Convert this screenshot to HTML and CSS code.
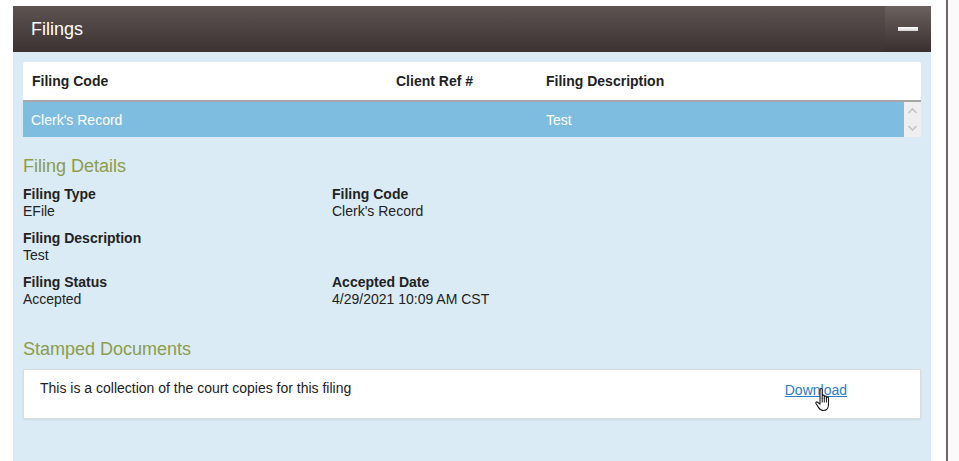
FILE: index.html
```html
<!DOCTYPE html>
<html lang="en">
<head>
    <meta charset="UTF-8">
    <meta name="viewport" content="width=device-width, initial-scale=1.0">
    <title>Filings</title>
    <link rel="stylesheet" href="styles.css">
</head>
<body>
    <div class="page">
        <div class="panel">
            <div class="panel-header">
                <h2 class="panel-title">Filings</h2>
                <div class="collapse-btn"><span class="minus"></span></div>
            </div>
            <div class="panel-body">
                <div class="grid">
                    <div class="grid-head">
                        <div>Filing Code</div>
                        <div>Client Ref #</div>
                        <div>Filing Description</div>
                    </div>
                    <div class="grid-content">
                        <div class="grid-rows">
                            <div class="grid-row selected">
                                <div>Clerk's Record</div>
                                <div></div>
                                <div>Test</div>
                            </div>
                        </div>
                        <div class="scrollbar">
                            <svg width="17" height="35" viewBox="0 0 17 35">
                                <path d="M4.5 11 L8.5 7 L12.5 11" fill="none" stroke="#c4c4c4" stroke-width="1.6"/>
                                <path d="M4.5 24 L8.5 28 L12.5 24" fill="none" stroke="#c4c4c4" stroke-width="1.6"/>
                            </svg>
                        </div>
                    </div>
                </div>

                <h3 class="section-title">Filing Details</h3>
                <div class="details">
                    <div class="field">
                        <div class="field-label">Filing Type</div>
                        <div class="field-value">EFile</div>
                    </div>
                    <div class="field">
                        <div class="field-label">Filing Code</div>
                        <div class="field-value">Clerk's Record</div>
                    </div>
                    <div class="field">
                        <div class="field-label">Filing Description</div>
                        <div class="field-value">Test</div>
                    </div>
                    <div class="field"></div>
                    <div class="field">
                        <div class="field-label">Filing Status</div>
                        <div class="field-value">Accepted</div>
                    </div>
                    <div class="field">
                        <div class="field-label">Accepted Date</div>
                        <div class="field-value">4/29/2021 10:09 AM CST</div>
                    </div>
                </div>

                <h3 class="section-title stamped">Stamped Documents</h3>
                <div class="doc-box">
                    <div class="doc-text">This is a collection of the court copies for this filing</div>
                    <div class="doc-link">
                        <a href="#">Download</a>
                        <svg class="cursor" width="16" height="26" viewBox="0 0 16 26">
                            <path d="M5 2.5 C5 1.2 7.2 1.2 7.2 2.5 L7.2 11 L7.2 9 C7.2 7.8 9.3 7.8 9.3 9 L9.3 11.5 L9.3 10 C9.3 8.8 11.4 8.8 11.4 10 L11.4 12 L11.4 11 C11.4 9.8 13.5 9.8 13.5 11 L13.5 17.5 C13.5 21 11.5 23.5 8.5 23.5 C6 23.5 4.8 22.5 3.6 20.6 L1 16.5 C0.4 15.5 1.6 14.4 2.6 15.2 L5 17.2 Z" fill="#fff" stroke="#1a1a1a" stroke-width="1.1" stroke-linejoin="round"/>
                            <path d="M9.3 11.5 L9.3 15.5 M11.4 12 L11.4 15.5 M7.2 11 L7.2 15.5" stroke="#1a1a1a" stroke-width="1"/>
                        </svg>
                    </div>
                </div>
            </div>
        </div>
        <div class="side"></div>
    </div>
</body>
</html>
```

FILE: styles.css
```css
body {
    font-family: "Liberation Sans", Arial, sans-serif;
    font-size: 14px;
    color: #333;
    background-color: #fff;
    margin: 0;
    padding: 0;
    overflow: hidden;
}

.page {
    display: flex;
    height: 461px;
}

.panel {
    width: 918px;
    margin: 6px 15px 0 13px;
    background-color: #daebf5;
    display: flex;
    flex-direction: column;
}

.side {
    flex: 1;
    border-left: 2px solid #6d6565;
    background-color: #fafafa;
}

.panel-header {
    height: 46px;
    display: flex;
    align-items: center;
    background: linear-gradient(to bottom, #5d5351, #3b3232);
}

.panel-title {
    flex: 1;
    margin: 0;
    padding-left: 18px;
    font-size: 18px;
    font-weight: normal;
    color: #fff;
}

.collapse-btn {
    width: 46px;
    height: 46px;
    display: flex;
    align-items: center;
    justify-content: center;
    background: linear-gradient(to bottom, #6b615e, #382f2f);
}

.minus {
    width: 20px;
    height: 4px;
    background: linear-gradient(to bottom, #ffffff, #d4d4d4);
}

.panel-body {
    flex: 1;
    padding: 10px 10px 0 10px;
}

.grid {
    background-color: #fff;
    border-radius: 2px 2px 0 0;
}

.grid-head,
.grid-row {
    display: grid;
    grid-template-columns: 364px 150px 1fr;
    align-items: center;
}

.grid-head {
    height: 38px;
    padding-left: 9px;
    font-weight: bold;
    color: #222;
    border-bottom: 2px solid #a6a6a6;
}

.grid-content {
    display: flex;
    background-color: #daebf5;
}

.grid-rows {
    flex: 1;
}

.grid-row {
    height: 35px;
    padding-left: 8px;
    color: #fff;
}

.grid-row.selected {
    background-color: #7fbde0;
}

.grid-row div:nth-child(3) {
    padding-left: 1px;
}

.scrollbar {
    width: 17px;
    height: 35px;
    background-color: #efefef;
}

.scrollbar svg {
    display: block;
}

.section-title {
    margin: 19px 0 9px 0;
    font-size: 18px;
    font-weight: normal;
    color: #8d9c4d;
    line-height: 21px;
}

.section-title.stamped {
    margin-top: 31px;
    margin-bottom: 9px;
}

.details {
    display: grid;
    grid-template-columns: 309px 1fr;
    row-gap: 10px;
}

.field-label {
    font-weight: bold;
    color: #222;
    line-height: 17px;
}

.field-value {
    line-height: 17px;
    color: #222;
}

.doc-box {
    height: 50px;
    box-sizing: border-box;
    display: flex;
    background-color: #fff;
    border: 1px solid #dcdcdc;
    box-shadow: 0 1px 2px rgba(0, 0, 0, 0.08);
    padding: 10px 73px 0 16px;
}

.doc-text {
    flex: 1;
    color: #222;
}

.doc-link {
    position: relative;
    padding-top: 2px;
}

.doc-link a {
    color: #2b7dc4;
    text-decoration: underline;
}

.cursor {
    position: absolute;
    left: 30px;
    top: 7px;
}
```
